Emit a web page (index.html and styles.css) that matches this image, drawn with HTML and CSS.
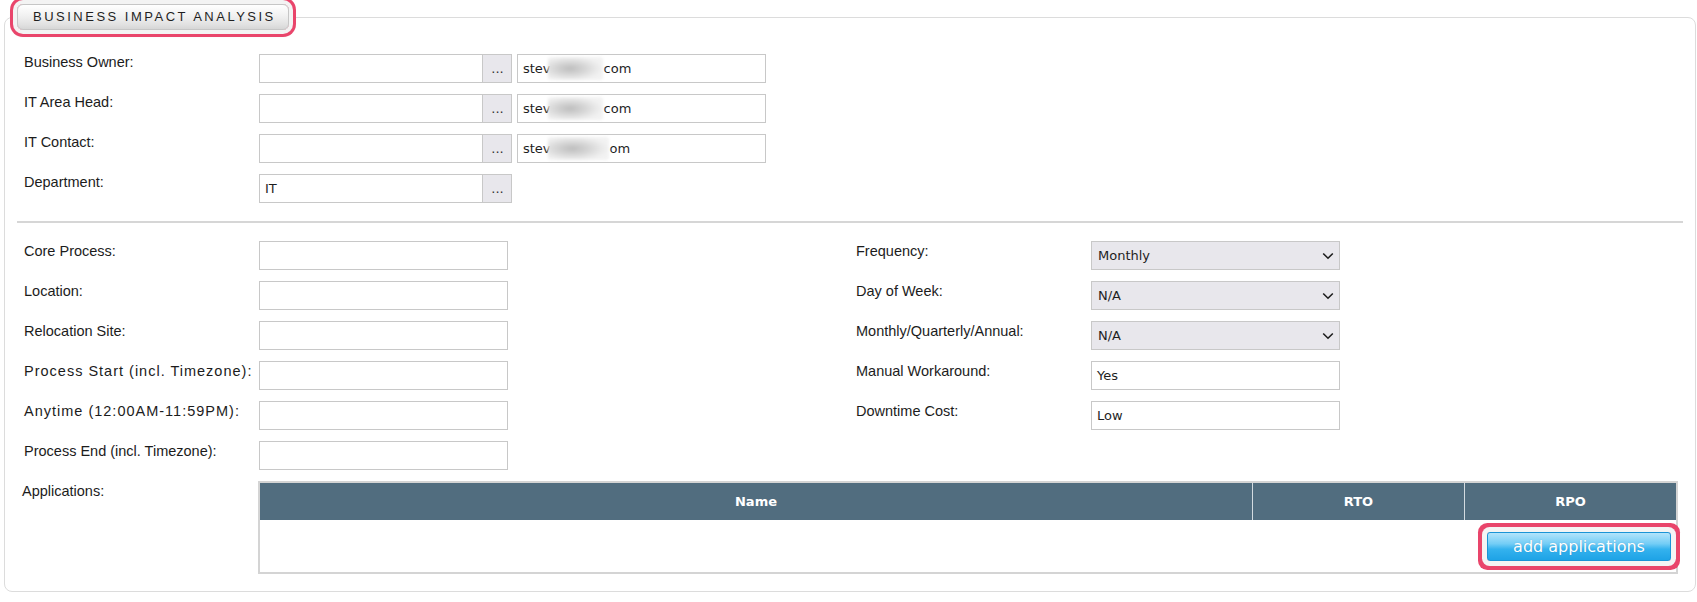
FILE: index.html
```html
<!DOCTYPE html>
<html lang="en">
<head>
<meta charset="utf-8">
<title>Business Impact Analysis</title>
<link rel="stylesheet" href="styles.css">
</head>
<body>
<fieldset class="panel">
  <legend class="panel-title">Business Impact Analysis</legend>

  <div class="contacts">
    <div class="row">
      <label class="lbl">Business Owner:</label>
      <div class="lookup"><div class="field lookup-text"></div><button class="dots" type="button">...</button></div>
      <div class="field email"><span>stev</span><span class="blur"></span><span>com</span></div>
    </div>
    <div class="row">
      <label class="lbl">IT Area Head:</label>
      <div class="lookup"><div class="field lookup-text"></div><button class="dots" type="button">...</button></div>
      <div class="field email"><span>stev</span><span class="blur"></span><span>com</span></div>
    </div>
    <div class="row">
      <label class="lbl">IT Contact:</label>
      <div class="lookup"><div class="field lookup-text"></div><button class="dots" type="button">...</button></div>
      <div class="field email"><span>stev</span><span class="blur blur-wide"></span><span>om</span></div>
    </div>
    <div class="row">
      <label class="lbl">Department:</label>
      <div class="lookup"><div class="field lookup-text">IT</div><button class="dots" type="button">...</button></div>
    </div>
  </div>

  <hr class="sep">

  <div class="details">
    <div class="col">
      <div class="row"><label class="lbl lbl-mid">Core Process:</label><div class="field wide"></div></div>
      <div class="row"><label class="lbl lbl-mid">Location:</label><div class="field wide"></div></div>
      <div class="row"><label class="lbl lbl-mid">Relocation Site:</label><div class="field wide"></div></div>
      <div class="row"><label class="lbl lbl-mid lbl-spaced">Process Start (incl. Timezone):</label><div class="field wide"></div></div>
      <div class="row"><label class="lbl lbl-mid lbl-spaced">Anytime (12:00AM-11:59PM):</label><div class="field wide"></div></div>
      <div class="row"><label class="lbl lbl-mid">Process End (incl. Timezone):</label><div class="field wide"></div></div>
    </div>
    <div class="col">
      <div class="row"><label class="lbl lbl-mid">Frequency:</label>
        <div class="select-wrap"><select class="select"><option>Monthly</option></select>
          <svg class="chev" width="12" height="8" viewBox="0 0 12 8"><path d="M1.2 1.5 L6 6.2 L10.8 1.5" fill="none" stroke="#1e1e1e" stroke-width="1.6"/></svg></div>
      </div>
      <div class="row"><label class="lbl lbl-mid">Day of Week:</label>
        <div class="select-wrap"><select class="select"><option>N/A</option></select>
          <svg class="chev" width="12" height="8" viewBox="0 0 12 8"><path d="M1.2 1.5 L6 6.2 L10.8 1.5" fill="none" stroke="#1e1e1e" stroke-width="1.6"/></svg></div>
      </div>
      <div class="row"><label class="lbl lbl-mid">Monthly/Quarterly/Annual:</label>
        <div class="select-wrap"><select class="select"><option>N/A</option></select>
          <svg class="chev" width="12" height="8" viewBox="0 0 12 8"><path d="M1.2 1.5 L6 6.2 L10.8 1.5" fill="none" stroke="#1e1e1e" stroke-width="1.6"/></svg></div>
      </div>
      <div class="row"><label class="lbl lbl-mid">Manual Workaround:</label><div class="field wide">Yes</div></div>
      <div class="row"><label class="lbl lbl-mid">Downtime Cost:</label><div class="field wide">Low</div></div>
    </div>
  </div>

  <div class="apps">
    <label class="lbl lbl-apps">Applications:</label>
    <div class="apps-table">
      <div class="apps-head">
        <div class="th">Name</div>
        <div class="th th-sep">RTO</div>
        <div class="th th-sep">RPO</div>
      </div>
      <div class="apps-body">
        <button class="add-btn" type="button">add applications</button>
      </div>
    </div>
  </div>
</fieldset>
</body>
</html>
```

FILE: styles.css
```css
* { box-sizing: border-box; }

html, body {
  margin: 0;
  padding: 0;
  background: #ffffff;
}

body {
  width: 1697px;
  height: 602px;
  overflow: hidden;
  font-family: "Liberation Sans", Arial, sans-serif;
  color: #1c1c1c;
}

.panel {
  margin: 4px 1px 0 4px;
  padding: 0;
  border: 1px solid #dcdcdc;
  border-radius: 8px;
  min-width: 0;
}

.panel-title {
  margin-left: 12px;
  padding: 0 12px 0 15px;
  height: 26px;
  line-height: 24px;
  border: 1px solid #c6c6c6;
  border-radius: 6px;
  background: linear-gradient(#ffffff 0%, #f1f1f1 45%, #e2e2e2 80%, #d6d6d6 100%);
  box-shadow: 0 0 0 4px #f3f3f3, 0 0 0 7px #e9456b, 0 1px 3px 5px rgba(0,0,0,0.10);
  font-family: "Liberation Sans", Arial, sans-serif;
  font-size: 13px;
  letter-spacing: 2.5px;
  text-transform: uppercase;
  color: #1f1f1f;
}

.contacts {
  padding: 24px 0 18px 19px;
  display: flex;
  flex-direction: column;
  gap: 11px;
}

.row {
  display: flex;
  align-items: flex-start;
  height: 29px;
}

.lbl {
  flex: none;
  width: 235px;
  font-size: 14.5px;
  line-height: 16px;
  color: #1c1c1c;
}

.lbl-mid {
  padding-top: 2px;
}

.lbl-spaced {
  letter-spacing: 1px;
}

.field {
  height: 29px;
  border: 1px solid #c8c8c8;
  background: #ffffff;
  padding: 0 5px;
  font-family: "DejaVu Sans", Verdana, sans-serif;
  font-size: 13px;
  line-height: 27px;
  color: #1e1e1e;
  display: flex;
  align-items: center;
  white-space: nowrap;
  overflow: hidden;
}

.lookup {
  display: flex;
  width: 253px;
}

.lookup-text {
  width: 224px;
  border-right: none;
}

.dots {
  width: 30px;
  height: 29px;
  margin: 0;
  padding: 0 0 0 1px;
  border: 1px solid #c8c8c8;
  background: #e8e7ec;
  font-family: "DejaVu Sans", Verdana, sans-serif;
  font-size: 13px;
  line-height: 27px;
  color: #333333;
}

.email {
  width: 249px;
  margin-left: 5px;
}

.blur {
  display: inline-block;
  width: 55px;
  height: 23px;
  margin-left: -3px;
  margin-right: 1px;
  border-radius: 3px;
  background: radial-gradient(ellipse 60% 55% at 40% 50%, #bdbdbd 0%, #d5d5d5 45%, #e9e9e9 80%, #f2f2f2 100%);
  filter: blur(1.5px);
}

.blur-wide {
  width: 61px;
}

.sep {
  margin: 0 12px;
  height: 2px;
  border: none;
  background: #d6d6d6;
}

.details {
  display: grid;
  grid-template-columns: 832px 1fr;
  padding: 18px 0 0 19px;
}

.col {
  display: flex;
  flex-direction: column;
  gap: 11px;
}

.wide {
  width: 249px;
}

.select-wrap {
  position: relative;
  width: 249px;
  height: 29px;
}

.select {
  appearance: none;
  -webkit-appearance: none;
  width: 100%;
  height: 29px;
  margin: 0;
  border: 1px solid #c8c8c8;
  border-radius: 0;
  background: #e8e7ec;
  padding: 0 24px 0 6px;
  font-family: "DejaVu Sans", Verdana, sans-serif;
  font-size: 13px;
  color: #1e1e1e;
  outline: none;
}

.chev {
  position: absolute;
  right: 6px;
  top: 11px;
  pointer-events: none;
}

.apps {
  display: flex;
  align-items: flex-start;
  margin-top: 11px;
  padding: 0 17px 17px 17px;
}

.lbl-apps {
  width: 236px;
  padding-top: 2px;
}

.apps-table {
  flex: 1;
  border: 2px solid #d4d4d4;
}

.apps-head {
  display: grid;
  grid-template-columns: 1fr 212px 212px;
  height: 37px;
  background: #516d7f;
}

.th {
  display: flex;
  align-items: center;
  justify-content: center;
  font-family: "DejaVu Sans", Verdana, sans-serif;
  font-weight: bold;
  font-size: 13px;
  color: #ffffff;
}

.th-sep {
  border-left: 1px solid #d3dbe0;
}

.apps-body {
  height: 52px;
  display: flex;
  justify-content: flex-end;
  align-items: flex-start;
  padding: 12px 5px 0 0;
}

.add-btn {
  width: 184px;
  height: 29px;
  margin: 0;
  padding: 0;
  border: 1px solid #1a94d6;
  border-radius: 3px;
  background: linear-gradient(#b3e4fb 0%, #73cdf6 40%, #34b2ee 60%, #1ea3e6 100%);
  box-shadow: 0 0 0 5px #f4f4f4, 0 0 0 9px #e9456b;
  font-family: "DejaVu Sans", Verdana, sans-serif;
  font-size: 16px;
  color: #ffffff;
  text-shadow: 0 0 1px rgba(0, 70, 120, 0.35);
}
```
